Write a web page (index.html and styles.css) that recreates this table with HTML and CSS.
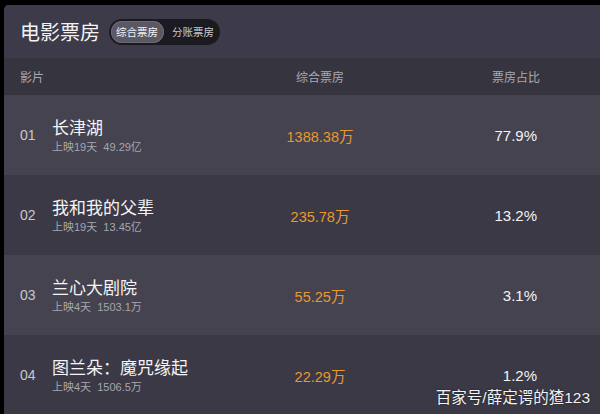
FILE: index.html
```html
<!DOCTYPE html>
<html lang="zh">
<head>
<meta charset="utf-8">
<link rel="stylesheet" href="styles.css">
</head>
<body>
<div class="card">
  <div class="top">
    <h1 class="title">电影票房</h1>
    <div class="toggle">
      <span class="seg active">综合票房</span>
      <span class="seg">分账票房</span>
    </div>
  </div>
  <div class="row head">
    <div class="c1">影片</div>
    <div class="c2">综合票房</div>
    <div class="c3">票房占比</div>
  </div>
  <div class="row light">
    <div class="c1"><span class="rank">01</span><div class="name"><div class="mt">长津湖</div><div class="sub">上映19天&nbsp;&nbsp;49.29亿</div></div></div>
    <div class="c2 money">1388.38万</div>
    <div class="c3 pct">77.9%</div>
  </div>
  <div class="row dark">
    <div class="c1"><span class="rank">02</span><div class="name"><div class="mt">我和我的父辈</div><div class="sub">上映19天&nbsp;&nbsp;13.45亿</div></div></div>
    <div class="c2 money">235.78万</div>
    <div class="c3 pct">13.2%</div>
  </div>
  <div class="row light">
    <div class="c1"><span class="rank">03</span><div class="name"><div class="mt">兰心大剧院</div><div class="sub">上映4天&nbsp;&nbsp;1503.1万</div></div></div>
    <div class="c2 money">55.25万</div>
    <div class="c3 pct">3.1%</div>
  </div>
  <div class="row dark">
    <div class="c1"><span class="rank">04</span><div class="name"><div class="mt">图兰朵：魔咒缘起</div><div class="sub">上映4天&nbsp;&nbsp;1506.5万</div></div></div>
    <div class="c2 money">22.29万</div>
    <div class="c3 pct">1.2%</div>
  </div>
</div>
<div class="wm">百家号/薛定谔的猹123</div>
</body>
</html>
```
FILE: styles.css
```css
html, body {
  margin: 0;
  padding: 0;
  background: #000;
  width: 600px;
  height: 414px;
  overflow: hidden;
  font-family: "Liberation Sans", "Noto Sans CJK SC", sans-serif;
}
.card {
  margin: 5px 0 0 4px;
  width: 596px;
  height: 409px;
  background: #3b3946;
  border-top-left-radius: 5px;
  overflow: hidden;
}
.top {
  height: 53px;
  display: flex;
  align-items: center;
  padding-left: 16px;
  gap: 9px;
  background: #3d3b49;
}
.title {
  margin: 0;
  font-family: "Noto Sans CJK SC", sans-serif;
  font-weight: 400;
  font-size: 20px;
  color: #f3f3f5;
  line-height: 24px;
}
.toggle {
  display: flex;
  align-items: center;
  height: 26px;
  box-sizing: border-box;
  padding: 2px;
  background: #1b1a20;
  border-radius: 13px;
}
.seg {
  font-family: "Noto Sans CJK SC", sans-serif;
  font-size: 10.5px;
  line-height: 22px;
  padding: 0 4px 0 8px;
  color: #c9c8cd;
}
.seg.active {
  padding: 0 6px 0 5px;
  background: #5a5865;
  border-radius: 11px;
  color: #f5f5f7;
  box-shadow: inset 0 0 0 1px #6a6874;
}
.row {
  display: grid;
  grid-template-columns: 216px 200px 1fr;
  align-items: center;
}
.row.head {
  height: 37px;
  background: #36343f;
  font-family: "Noto Sans CJK SC", sans-serif;
  font-size: 12px;
  color: #a9a8b0;
}
.row.light { height: 80px; background: #45434f; }
.row.dark { height: 80px; background: #3b3946; }
.c1 {
  padding-left: 16px;
  display: flex;
  align-items: center;
}
.c2 { text-align: center; }
.c3 { text-align: right; padding-right: 63px; }
.row.head .c3 { padding-right: 60px; }
.rank {
  width: 32px;
  font-size: 14px;
  color: #c8c7cc;
}
.name {
  display: flex;
  flex-direction: column;
  gap: 2px;
}
.mt {
  font-family: "Noto Sans CJK SC", sans-serif;
  font-size: 17px;
  line-height: 22px;
  color: #f4f4f6;
}
.sub {
  font-size: 11px;
  line-height: 14px;
  color: #a7a6ad;
}
.money {
  font-size: 14.5px;
  color: #e8982f;
}
.pct {
  font-size: 15px;
  color: #f3f3f5;
}
.wm {
  position: absolute;
  right: 10px;
  bottom: 7px;
  font-size: 15.5px;
  line-height: 18px;
  color: #f2f2f2;
  text-shadow: 0 0 2px rgba(0,0,0,0.6);
}
```
